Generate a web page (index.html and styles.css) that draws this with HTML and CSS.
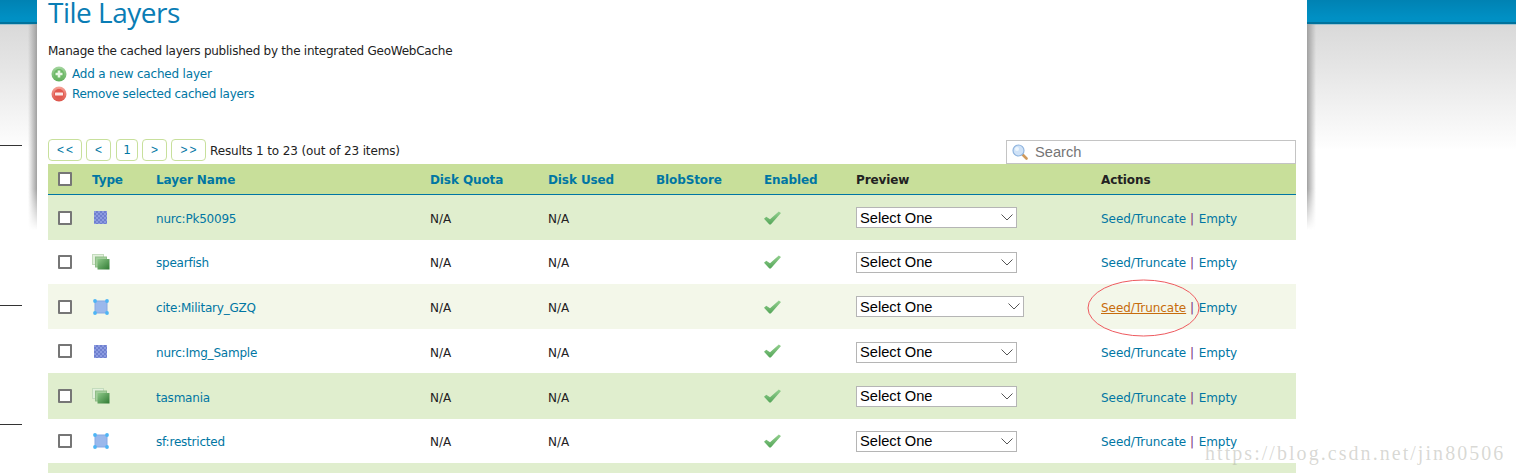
FILE: index.html
```html
<!DOCTYPE html>
<html lang="en">
<head>
<meta charset="utf-8">
<title>Tile Layers</title>
<link rel="stylesheet" href="styles.css">
</head>
<body>
<svg width="0" height="0" class="defs">
  <defs>
    <linearGradient id="pg" x1="0" y1="0" x2="0" y2="1"><stop offset="0" stop-color="#a5d6a0"/><stop offset="1" stop-color="#5fae5a"/></linearGradient>
    <linearGradient id="rg" x1="0" y1="0" x2="0" y2="1"><stop offset="0" stop-color="#f6a398"/><stop offset="1" stop-color="#dc5248"/></linearGradient>
    <linearGradient id="vg" x1="0" y1="0" x2="1" y2="1"><stop offset="0" stop-color="#8fc98a"/><stop offset="1" stop-color="#2f7a32"/></linearGradient>
    <linearGradient id="cg" x1="0" y1="0" x2="0" y2="1"><stop offset="0" stop-color="#93d08f"/><stop offset="1" stop-color="#55a659"/></linearGradient>
    <pattern id="rp" width="4" height="4" patternUnits="userSpaceOnUse"><rect width="4" height="4" fill="#6f80cf"/><rect width="2" height="2" fill="#8c9be0"/><rect x="2" y="2" width="2" height="2" fill="#8c9be0"/></pattern>
    <symbol id="i-raster" viewBox="0 0 13 13"><rect width="13" height="13" fill="url(#rp)"/></symbol>
    <symbol id="i-group" viewBox="0 0 18 16"><rect x="0.500" y="0.500" width="11" height="10" fill="#e3f0dd" stroke="#c4dcbd"/><rect x="3.500" y="3" width="11" height="10" fill="#a3cf9c" stroke="#8fbd88"/><rect x="5.500" y="5" width="12" height="10.500" fill="url(#vg)"/></symbol>
    <symbol id="i-poly" viewBox="0 0 16 16"><rect x="2" y="2" width="12" height="12" fill="#9ab8ec" stroke="#86a8e4"/><circle cx="2" cy="2" r="1.900" fill="#4db5f5"/><circle cx="14" cy="2" r="1.900" fill="#4db5f5"/><circle cx="2" cy="14" r="1.900" fill="#4db5f5"/><circle cx="14" cy="14" r="1.900" fill="#4db5f5"/></symbol>
    <symbol id="i-check" viewBox="0 0 17 14"><path d="M0 7.800 L2.300 5.800 L6 8.300 L14.800 0.500 L17 2 L6.800 13.500 L5.400 13.500 Z" fill="url(#cg)"/></symbol>
  </defs>
</svg>

<div class="topbar"></div>
<i class="tick tick-a"></i><i class="tick tick-b"></i><i class="tick tick-c"></i>

<main class="panel">
  <h1 class="title">Tile Layers</h1>
  <p class="lead">Manage the cached layers published by the integrated GeoWebCache</p>
  <ul class="links">
    <li><svg class="round" viewBox="0 0 16 16"><circle cx="8" cy="8" r="7.500" fill="url(#pg)"/><circle cx="8" cy="8" r="5" fill="#6cb866"/><path d="M6.700 4.500h2.600v2.200h2.200v2.600H9.300v2.200H6.700V9.300H4.500V6.700h2.200z" fill="#e9f7e6"/></svg><a class="add" href="#">Add a new cached layer</a></li>
    <li><svg class="round" viewBox="0 0 16 16"><circle cx="8" cy="8" r="7.500" fill="url(#rg)"/><circle cx="8" cy="8" r="5" fill="#e2584e"/><rect x="4" y="6.600" width="8" height="2.800" rx="0.500" fill="#fbe9e7"/></svg><a class="rem" href="#">Remove selected cached layers</a></li>
  </ul>

  <div class="toolbar">
    <div class="pager">
      <a class="pg pg-w pg-a" href="#">&lt;&lt;</a>
      <a class="pg pg-a" href="#">&lt;</a>
      <a class="pg pg-n" href="#">1</a>
      <a class="pg pg-a" href="#">&gt;</a>
      <a class="pg pg-x pg-a" href="#">&gt;&gt;</a>
      <span class="results">Results 1 to 23 (out of 23 items)</span>
    </div>
    <div class="search">
      <svg class="glass" viewBox="0 0 16 16"><path d="M10 10l4.500 4.500" stroke="#d09a5c" stroke-width="2.600" stroke-linecap="round"/><circle cx="6.500" cy="6.500" r="5.500" fill="#cfe2f7" stroke="#8fb4de" stroke-width="1.200"/><circle cx="5" cy="5" r="2" fill="#eef6fd"/></svg>
      <span class="search-text">Search</span>
    </div>
  </div>

  <table class="grid">
    <colgroup><col class="c1"><col class="c2"><col class="c3"><col class="c4"><col class="c5"><col class="c6"><col class="c7"><col class="c8"><col class="c9"></colgroup>
    <thead>
      <tr>
        <th><span class="box"></span></th>
        <th><a href="#">Type</a></th>
        <th><a href="#">Layer Name</a></th>
        <th><a href="#">Disk Quota</a></th>
        <th><a href="#">Disk Used</a></th>
        <th><a href="#">BlobStore</a></th>
        <th><a href="#">Enabled</a></th>
        <th>Preview</th>
        <th>Actions</th>
      </tr>
    </thead>
    <tbody>
      <tr class="odd r45">
        <td><span class="box"></span></td>
        <td><svg class="ic ic-r"><use href="#i-raster"/></svg></td>
        <td class="tx nm"><a href="#">nurc:Pk50095</a></td>
        <td class="tx">N/A</td><td class="tx">N/A</td><td></td>
        <td><svg class="ok"><use href="#i-check"/></svg></td>
        <td><span class="sel"><select><option>Select One</option></select><svg class="chev" viewBox="0 0 12 7"><path d="M0.500 0.500L6 6l5.500-5.500" fill="none" stroke="#555"/></svg></span></td>
        <td class="tx act"><a href="#">Seed/Truncate</a> <b>|</b> <a href="#">Empty</a></td>
      </tr>
      <tr class="even r44">
        <td><span class="box"></span></td>
        <td><svg class="ic ic-g"><use href="#i-group"/></svg></td>
        <td class="tx nm"><a href="#">spearfish</a></td>
        <td class="tx">N/A</td><td class="tx">N/A</td><td></td>
        <td><svg class="ok"><use href="#i-check"/></svg></td>
        <td><span class="sel"><select><option>Select One</option></select><svg class="chev" viewBox="0 0 12 7"><path d="M0.500 0.500L6 6l5.500-5.500" fill="none" stroke="#555"/></svg></span></td>
        <td class="tx act"><a href="#">Seed/Truncate</a> <b>|</b> <a href="#">Empty</a></td>
      </tr>
      <tr class="hover r45">
        <td><span class="box"></span></td>
        <td><svg class="ic ic-p"><use href="#i-poly"/></svg></td>
        <td class="tx nm"><a href="#">cite:Military_GZQ</a></td>
        <td class="tx">N/A</td><td class="tx">N/A</td><td></td>
        <td><svg class="ok"><use href="#i-check"/></svg></td>
        <td><span class="sel sel-wide"><select><option>Select One</option></select><svg class="chev" viewBox="0 0 12 7"><path d="M0.500 0.500L6 6l5.500-5.500" fill="none" stroke="#555"/></svg></span></td>
        <td class="tx act"><a class="hot" href="#">Seed/Truncate</a> <b>|</b> <a href="#">Empty</a></td>
      </tr>
      <tr class="even r44 low">
        <td><span class="box"></span></td>
        <td><svg class="ic ic-r"><use href="#i-raster"/></svg></td>
        <td class="tx nm"><a href="#">nurc:Img_Sample</a></td>
        <td class="tx">N/A</td><td class="tx">N/A</td><td></td>
        <td><svg class="ok"><use href="#i-check"/></svg></td>
        <td class="pick"><span class="sel"><select><option>Select One</option></select><svg class="chev" viewBox="0 0 12 7"><path d="M0.500 0.500L6 6l5.500-5.500" fill="none" stroke="#555"/></svg></span></td>
        <td class="tx act"><a href="#">Seed/Truncate</a> <b>|</b> <a href="#">Empty</a></td>
      </tr>
      <tr class="odd r46 low">
        <td><span class="box"></span></td>
        <td><svg class="ic ic-g"><use href="#i-group"/></svg></td>
        <td class="tx nm"><a href="#">tasmania</a></td>
        <td class="tx">N/A</td><td class="tx">N/A</td><td></td>
        <td><svg class="ok"><use href="#i-check"/></svg></td>
        <td><span class="sel"><select><option>Select One</option></select><svg class="chev" viewBox="0 0 12 7"><path d="M0.500 0.500L6 6l5.500-5.500" fill="none" stroke="#555"/></svg></span></td>
        <td class="tx act"><a href="#">Seed/Truncate</a> <b>|</b> <a href="#">Empty</a></td>
      </tr>
      <tr class="even r44">
        <td><span class="box"></span></td>
        <td><svg class="ic ic-p"><use href="#i-poly"/></svg></td>
        <td class="tx nm"><a href="#">sf:restricted</a></td>
        <td class="tx">N/A</td><td class="tx">N/A</td><td></td>
        <td><svg class="ok"><use href="#i-check"/></svg></td>
        <td><span class="sel"><select><option>Select One</option></select><svg class="chev" viewBox="0 0 12 7"><path d="M0.500 0.500L6 6l5.500-5.500" fill="none" stroke="#555"/></svg></span></td>
        <td class="tx act"><a href="#">Seed/Truncate</a> <b>|</b> <a href="#">Empty</a></td>
      </tr>
      <tr class="odd r10"><td colspan="9"></td></tr>
    </tbody>
  </table>
</main>

<svg class="ring" viewBox="0 0 113 58"><ellipse cx="56.500" cy="29" rx="55.500" ry="28" fill="none" stroke="#ee5a5f" stroke-width="1"/></svg>
<div class="watermark">https://blog.csdn.net/jin80506</div>
</body>
</html>
```
FILE: styles.css
```css
* { box-sizing: border-box; }
html, body { margin: 0; padding: 0; height: 473px; overflow: hidden; }
body {
  position: relative;
  font-family: "DejaVu Sans", Verdana, sans-serif;
  font-size: 12px;
  color: #222;
  background: #fff linear-gradient(#d9d9d9 24px, #e6e6e6 70px, #fdfdfd 145px, #fff 150px) no-repeat;
}
a { color: #0076a3; text-decoration: none; }
.defs { position: absolute; }

.topbar {
  height: 24px;
  background: linear-gradient(#0082b3, #0090c4 18px);
  border-bottom: 2px solid #00729c;
  box-shadow: 0 1px 0 #9fc4d2;
}
.tick { position: absolute; left: 0; width: 22px; height: 1px; background: #333; }
.tick-a { top: 145px; }
.tick-b { top: 305px; }
.tick-c { top: 424px; }

.panel {
  position: absolute;
  top: 0;
  left: 37px;
  width: 1270px;
  height: 473px;
  padding: 0 11px;
  background: #fff;
}
.panel::before, .panel::after {
  content: "";
  position: absolute;
  top: 24px;
  width: 9px;
  height: 206px;
  -webkit-mask-image: linear-gradient(#000 80%, transparent);
  mask-image: linear-gradient(#000 80%, transparent);
}
.panel::before { right: 100%; background: linear-gradient(to left, #a0a0a0, rgba(160,160,160,0)); }
.panel::after { left: 100%; background: linear-gradient(to right, #a0a0a0, rgba(160,160,160,0)); }

.title {
  margin: 0;
  height: 44px;
  font-family: "Open Sans", "DejaVu Sans", sans-serif;
  font-weight: 400;
  font-size: 28px;
  line-height: 25px;
  letter-spacing: -0.5px;
  color: #0a7db5;
}
.lead { margin: 0; height: 20px; line-height: 15px; letter-spacing: -0.25px; }
.links { list-style: none; margin: 0; padding: 0 0 0 3px; }
.links li { display: flex; align-items: center; height: 20px; gap: 5px; }
.add { letter-spacing: -0.19px; }
.rem { letter-spacing: -0.28px; }
.round { width: 16px; height: 16px; }

.toolbar {
  display: flex;
  justify-content: space-between;
  align-items: flex-start;
  height: 60px;
  padding-top: 35px;
}
.pager { display: flex; align-items: center; gap: 4px; height: 22px; }
.pg {
  display: flex;
  align-items: center;
  justify-content: center;
  width: 25px;
  height: 22px;
  border: 1px solid #c8e09c;
  border-radius: 4px;
  background: #fff;
}
.pg-a { font-family: "Liberation Sans", Arial, sans-serif; letter-spacing: 2px; padding-left: 2px; }
.pg-w { width: 34px; }
.pg-x { width: 35px; }
.pg-n { width: 22px; margin-left: 1px; }
.results { padding-top: 2px; letter-spacing: -0.13px; }
.search {
  display: flex;
  align-items: center;
  width: 290px;
  height: 24px;
  margin-top: 1px;
  padding-left: 5px;
  border: 1px solid #c4c4c4;
  background: #fff;
}
.glass { width: 16px; height: 16px; }
.search-text { margin-left: 7px; font-family: "Liberation Sans", Arial, sans-serif; font-size: 14.67px; color: #757575; }

.grid { width: 1248px; border-collapse: separate; border-spacing: 0; table-layout: fixed; }
.c1 { width: 44px; } .c2 { width: 64px; } .c3 { width: 274px; } .c4 { width: 118px; }
.c5 { width: 108px; } .c6 { width: 108px; } .c7 { width: 92px; } .c8 { width: 245px; } .c9 { width: 195px; }
.grid th, .grid td { padding: 0; text-align: left; vertical-align: middle; }
.grid th {
  height: 31px;
  padding-top: 2px;
  font-weight: 700;
  letter-spacing: -0.1px;
  color: #222;
  background: #c8df9a;
  border-bottom: 1px solid #0076a3;
}
.grid th:first-child { padding-top: 0; padding-left: 10px; }
.grid td:first-child { padding-left: 10px; }
.odd { background: #e0eece; }
.even { background: #fff; }
.hover { background: #f3f7e9; }
.r44 { height: 44px; }
.r45 { height: 45px; }
.r46 { height: 46px; }
.r10 { height: 10px; }
.grid td.tx { padding-top: 2px; }
.grid .low td.tx { padding-top: 4px; }
.grid td.pick { padding-top: 2px; }
.nm { letter-spacing: -0.22px; }

.box { display: block; width: 14px; height: 14px; border: 2px solid #767676; border-radius: 1px; background: #fff; }
.ic { display: block; }
.ic-r { width: 13px; height: 13px; margin-left: 2px; }
.ic-g { width: 18px; height: 16px; }
.ic-p { width: 16px; height: 16px; margin-left: 1px; }
.ok { display: block; width: 17px; height: 14px; }

.sel { position: relative; display: block; width: 161px; height: 21px; }
.sel-wide { width: 168px; }
.sel select {
  display: block;
  width: 100%;
  height: 100%;
  padding: 0 0 0 3px;
  border: 1px solid #b5b5b5;
  border-radius: 0;
  background: #fff;
  color: #000;
  font-family: "Liberation Sans", Arial, sans-serif;
  font-size: 14.67px;
  -webkit-appearance: none;
  appearance: none;
}
.chev { position: absolute; right: 4px; top: 7px; width: 12px; height: 7px; pointer-events: none; }

.act { letter-spacing: -0.05px; }
.act b { margin-right: 1px; font-weight: 400; color: #7a1f7a; }
a.hot { color: #c76c0c; text-decoration: underline; }

.ring { position: absolute; left: 1087px; top: 279px; width: 113px; height: 58px; }
.watermark {
  position: absolute;
  left: 1205px;
  top: 443px;
  font-family: "Liberation Serif", serif;
  font-size: 20px;
  letter-spacing: 2.050px;
  line-height: 20px;
  color: rgba(170,170,160,0.45);
  white-space: nowrap;
}
```
